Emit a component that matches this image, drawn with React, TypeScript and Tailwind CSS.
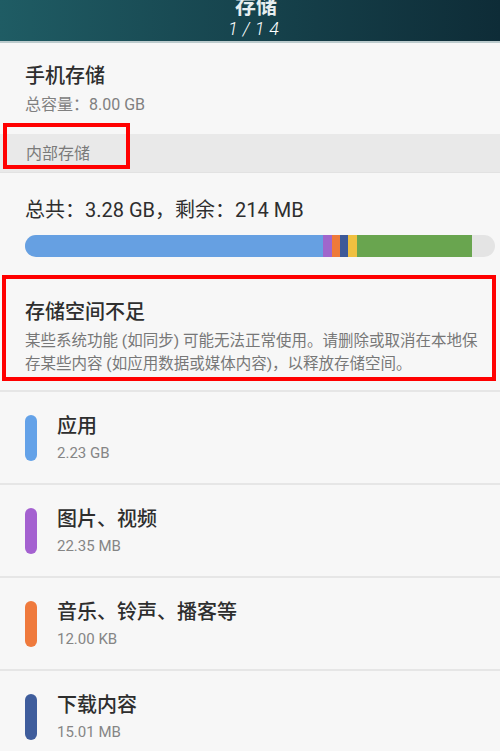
import React from "react";

const font = { fontFamily: 'Roboto, "Noto Sans CJK SC", sans-serif' };

const segments = [
  { w: "w-[298px]", c: "bg-[#66a0e2]" },
  { w: "w-[9px]", c: "bg-[#a066cc]" },
  { w: "w-[8px]", c: "bg-[#ee7a3a]" },
  { w: "w-[8px]", c: "bg-[#3e5a99]" },
  { w: "w-[9px]", c: "bg-[#f0c040]" },
  { w: "w-[115px]", c: "bg-[#69a54f]" },
];

const items = [
  { name: "应用", size: "2.23 GB", color: "bg-[#64a2e8]" },
  { name: "图片、视频", size: "22.35 MB", color: "bg-[#a461d0]" },
  { name: "音乐、铃声、播客等", size: "12.00 KB", color: "bg-[#ef7a3d]" },
  { name: "下载内容", size: "15.01 MB", color: "bg-[#3f5d9c]" },
];

export default function App() {
  return (
    <div className="w-[500px] h-[751px] overflow-hidden bg-[#f7f7f7]" style={font}>
      {/* Title bar */}
      <div className="h-[41px] bg-gradient-to-r from-[#1f5c64] to-[#0e2c37] flex flex-col items-center overflow-hidden pl-[12px]">
        <div className="-mt-[7px] text-[21px] leading-[26px] font-bold text-[#e6eef0]">存储</div>
        <div className="text-[18px] leading-[20px] text-white font-light tracking-[5px] italic">1/14</div>
      </div>
      <div className="h-[2px] bg-[#bccbcd]" />

      {/* Phone storage */}
      <div className="pt-[20px] pb-[19px] px-[25px]">
        <div className="text-[20px] leading-[26px] text-[#2e2e2e] font-medium">手机存储</div>
        <div className="mt-[6px] text-[16px] leading-[20px] text-[#808080]">总容量：8.00 GB</div>
      </div>

      {/* Section header */}
      <div className="relative h-[39px] bg-[#e9e9e9] px-[26px] pt-[9px] border-b border-[#e2e2e2]">
        <div className="text-[16px] leading-[22px] text-[#7a7a7a]">内部存储</div>
        <div className="absolute left-[3px] top-[-11px] w-[127px] h-[46px] border-[4px] border-[#ff0000]" />
      </div>

      {/* Usage */}
      <div className="px-[25px] pt-[24px] pb-[18px]">
        <div className="text-[20px] leading-[26px] text-[#2e2e2e]">总共：3.28 GB，剩余：214 MB</div>
        <div className="mt-[12px] h-[22px] w-[470px] rounded-full overflow-hidden flex bg-[#e4e4e4]">
          {segments.map((s, i) => (
            <div key={i} className={`${s.w} ${s.c} h-full`} />
          ))}
        </div>
      </div>

      {/* Warning */}
      <div className="mx-[2px] w-[494px] border-[4px] border-[#ff0000] pl-[19px] pt-[20px] pb-[1px]">
        <div className="text-[20px] leading-[26px] text-[#2e2e2e] font-medium">存储空间不足</div>
        <div className="mt-[5px] text-[15.5px] leading-[23px] text-[#777777] whitespace-nowrap">
          <span className="block">某些系统功能 (如同步) 可能无法正常使用。请删除或取消在本地保</span>
          <span className="block">存某些内容 (如应用数据或媒体内容)，以释放存储空间。</span>
        </div>
      </div>

      <div className="h-[9px]" />

      {/* Categories */}
      {items.map((it) => (
        <div key={it.name} className="h-[93px] border-t-[2px] border-[#e6e6e6] flex items-center px-[25px] gap-[20px]">
          <div className={`w-[12px] h-[46px] rounded-full ${it.color}`} />
          <div className="flex flex-col">
            <div className="text-[20px] leading-[26px] text-[#2e2e2e] font-medium">{it.name}</div>
            <div className="mt-[4px] text-[15px] leading-[20px] text-[#858585]">{it.size}</div>
          </div>
        </div>
      ))}
    </div>
  );
}
